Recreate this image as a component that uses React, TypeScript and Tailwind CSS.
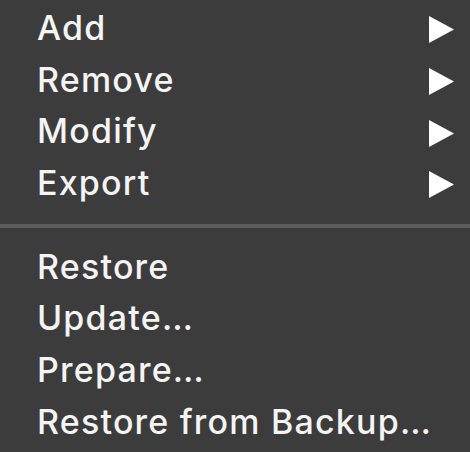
import React from "react";

const Arrow = () => (
  <svg width="25" height="27" viewBox="0 0 25 27" className="mt-[4px]">
    <polygon points="0,0 25,13.5 0,27" fill="#ffffff" />
  </svg>
);

const Row = ({ label, arrow }: { label: string; arrow?: boolean }) => (
  <div className="flex h-[51.7px] items-center justify-between pl-[37px] pr-[16px]">
    <span className="text-[34px] font-medium leading-none tracking-[1.2px] text-[#f4f4f4]">{label}</span>
    {arrow && <Arrow />}
  </div>
);

export default function App() {
  return (
    <div
      className="flex h-[452px] w-[470px] flex-col bg-[#3c3c3c] pt-[2px]"
      style={{ fontFamily: "Inter, 'Noto Sans', sans-serif" }}
    >
      <Row label="Add" arrow />
      <Row label="Remove" arrow />
      <Row label="Modify" arrow />
      <Row label="Export" arrow />
      <div className="mt-[15px] mb-[13px] h-[4px] w-full bg-[#5d5d5d]" />
      <Row label="Restore" />
      <Row label="Update…" />
      <Row label="Prepare…" />
      <Row label="Restore from Backup…" />
    </div>
  );
}
